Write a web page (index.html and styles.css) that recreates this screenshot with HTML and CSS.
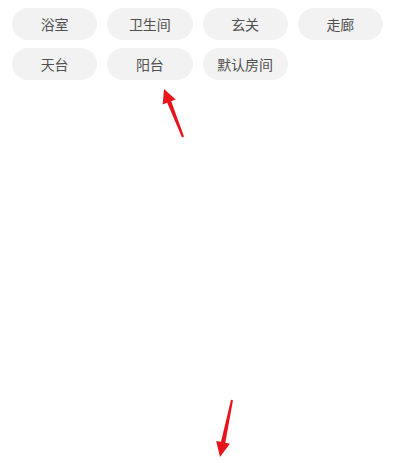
FILE: index.html
```html
<!DOCTYPE html>
<html lang="zh-CN">
<head>
    <meta charset="UTF-8">
    <meta name="viewport" content="width=device-width, initial-scale=1.0">
    <title>房间</title>
    <link rel="stylesheet" href="styles.css">
</head>
<body>
    <div class="page">
        <ul class="rooms">
            <li class="room">浴室</li>
            <li class="room">卫生间</li>
            <li class="room">玄关</li>
            <li class="room">走廊</li>
            <li class="room">天台</li>
            <li class="room">阳台</li>
            <li class="room">默认房间</li>
        </ul>

        <svg class="arrows" width="400" height="463" viewBox="0 0 400 463">
            <!-- up arrow pointing at 阳台 -->
            <polygon fill="#e8141c" points="164,89 175.7,99.4 171.2,101.2 184,136.6 182,137.4 167.2,102.8 162.7,104.6"/>
            <!-- down arrow at the bottom -->
            <polygon fill="#e8141c" points="220,457 229.9,443.7 225.3,442.8 233,400.2 231,399.8 221,441.8 216.2,440.9"/>
        </svg>
    </div>
</body>
</html>
```

FILE: styles.css
```css
body {
    margin: 0;
    padding: 0;
    background: #fff;
    font-family: "Noto Sans CJK SC", "Noto Sans", sans-serif;
}

.page {
    position: relative;
    width: 400px;
    height: 463px;
    overflow: hidden;
}

.rooms {
    list-style: none;
    margin: 0;
    padding: 8px 17px 0 12px;
    display: grid;
    grid-template-columns: repeat(4, 1fr);
    column-gap: 10px;
    row-gap: 8px;
}

.room {
    height: 32px;
    line-height: 32px;
    text-align: center;
    background: #f2f2f2;
    border-radius: 16px;
    color: #505050;
    font-size: 14px;
}

.arrows {
    position: absolute;
    left: 0;
    top: 0;
}
```
